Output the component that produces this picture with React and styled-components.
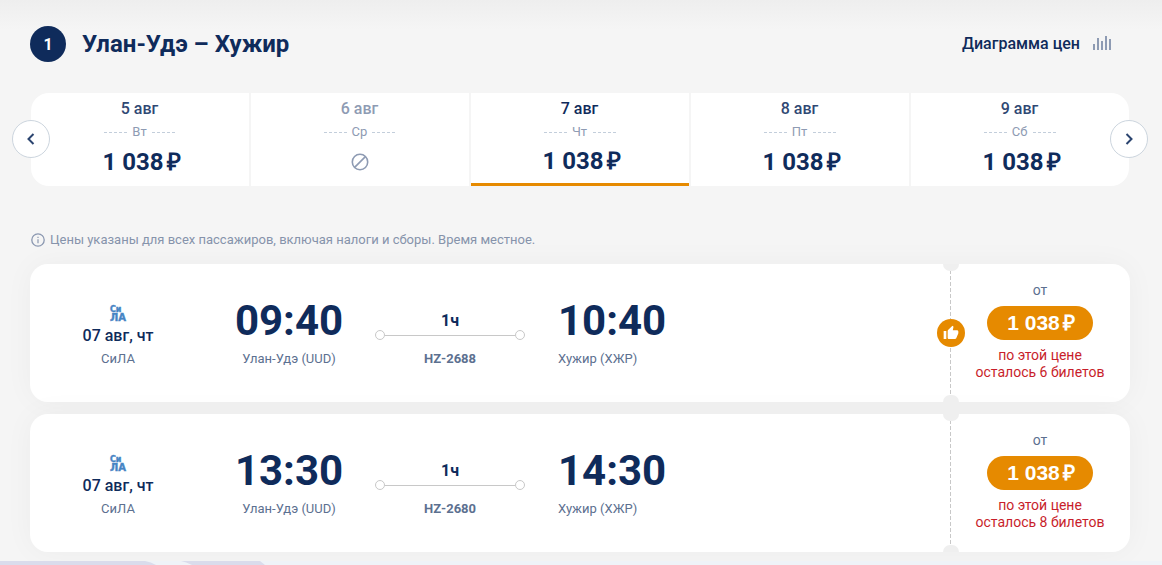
import React, {useState} from 'react';
import styled, {createGlobalStyle} from 'styled-components';

const days = [
  {date: '5 авг', weekday: 'Вт', price: '1 038'},
  {date: '6 авг', weekday: 'Ср', price: null},
  {date: '7 авг', weekday: 'Чт', price: '1 038'},
  {date: '8 авг', weekday: 'Пт', price: '1 038'},
  {date: '9 авг', weekday: 'Сб', price: '1 038'}
];

const flights = [
  {number: 'HZ-2688', depart: '09:40', arrive: '10:40', seats: 6, best: true},
  {number: 'HZ-2680', depart: '13:30', arrive: '14:30', seats: 8, best: false}
];

const ChartIcon = () => (
  <svg width="20" height="16" viewBox="0 0 20 16" fill="#8e9bb3" aria-hidden="true">
    <path d="M1 9h2v6H1zM5 3h2v12H5zM9 6h2v9H9zM13 1h2v14h-2zM17 4h2v11h-2z" />
  </svg>
);

const ArrowIcon = ({d}) => (
  <svg width="16" height="16" viewBox="0 0 16 16" fill="none" stroke="#2b446f" strokeWidth="2" aria-hidden="true">
    <path d={d} />
  </svg>
);

const NoFlightsIcon = () => (
  <svg width="18" height="18" viewBox="0 0 18 18" fill="none" stroke="#8e9bb3" strokeWidth="1.6" role="img" aria-label="Нет рейсов">
    <circle cx="9" cy="9" r="7.7" />
    <path d="M3.6 14.4L14.4 3.6" />
  </svg>
);

const InfoIcon = () => (
  <svg width="14" height="14" viewBox="0 0 14 14" fill="none" stroke="#8a97b0" aria-hidden="true">
    <circle cx="7" cy="7" r="6.2" strokeWidth="1.3" />
    <path d="M7 6.2V10.2M7 3.8V5.1" strokeWidth="1.2" />
  </svg>
);

const ThumbIcon = () => (
  <svg width="16" height="16" viewBox="0 0 24 24" fill="#fff" aria-hidden="true">
    <path d="M1 21h4V9H1v12zm22-11c0-1.100-.9-2-2-2h-6.310l.95-4.570.03-.32c0-.41-.17-.79-.44-1.060L14.170 1 7.590 7.590C7.220 7.950 7 8.450 7 9v10c0 1.100.9 2 2 2h9c.83 0 1.540-.5 1.840-1.220l3.020-7.050c.09-.23.14-.47.14-.73v-2z" />
  </svg>
);

const Flight = ({flight}) => (
  <FlightCard>
    <Airline>
      <AirlineLogo viewBox="0 0 18 16" aria-hidden="true">
        <text x="1" y="6" fontSize="8">Си</text>
        <text x="1" y="15" fontSize="10">ЛА</text>
      </AirlineLogo>
      <FlightDate>07 авг, чт</FlightDate>
      <Caption>СиЛА</Caption>
    </Airline>
    <Point $align="center">
      <Time>{flight.depart}</Time>
      <Caption>Улан-Удэ (UUD)</Caption>
    </Point>
    <Route>
      <Duration>1ч</Duration>
      <RouteLine />
      <Caption $bold>{flight.number}</Caption>
    </Route>
    <Point $align="flex-start">
      <Time>{flight.arrive}</Time>
      <Caption>Хужир (ХЖР)</Caption>
    </Point>
    <Fare>
      <Notch $edge="top" />
      <Notch $edge="bottom" />
      {flight.best && <BestBadge><ThumbIcon /></BestBadge>}
      <From>от</From>
      <BuyButton type="button">1 038<Ruble>₽</Ruble></BuyButton>
      <SeatsLeft>по этой цене<br />осталось {flight.seats} билетов</SeatsLeft>
    </Fare>
  </FlightCard>
);

const App = () => {
  const [selected, setSelected] = useState(2);

  return (
    <Page>
      <GlobalStyle />
      <Content>
        <Header>
          <StepNumber>1</StepNumber>
          <Title>Улан-Удэ – Хужир</Title>
          <ChartButton type="button">Диаграмма цен <ChartIcon /></ChartButton>
        </Header>

        <DateStrip>
          <ArrowButton type="button" $side="left" aria-label="Предыдущие даты"><ArrowIcon d="M10.500 3L5.500 8l5 5" /></ArrowButton>
          <DayList>
            {days.map((day, i) => (
              <Day key={day.date} type="button" $active={i === selected} disabled={!day.price} onClick={() => setSelected(i)}>
                <DayDate $active={i === selected} $empty={!day.price}>{day.date}</DayDate>
                <Weekday>{day.weekday}</Weekday>
                {day.price
                  ? <DayPrice $active={i === selected}>{day.price}<Ruble>₽</Ruble></DayPrice>
                  : <NoPrice><NoFlightsIcon /></NoPrice>}
              </Day>
            ))}
          </DayList>
          <ArrowButton type="button" $side="right" aria-label="Следующие даты"><ArrowIcon d="M5.500 3l5 5-5 5" /></ArrowButton>
        </DateStrip>

        <Note><InfoIcon /> Цены указаны для всех пассажиров, включая налоги и сборы. Время местное.</Note>

        <FlightList>
          {flights.map(flight => <Flight key={flight.number} flight={flight} />)}
        </FlightList>
      </Content>
      <Footer>
        <svg width="300" height="4" viewBox="0 0 300 4" fill="#dadcec" aria-hidden="true">
          <path d="M0 0H145Q151 1 156 4H0zM181 0H260L265 4H192Q186 1 181 0z" />
        </svg>
      </Footer>
    </Page>
  );
};

// styled components
const GlobalStyle = createGlobalStyle`
  * {
    box-sizing: border-box;
  }
  body {
    margin: 0;
    background: #f5f5f5;
    color: #0f2b5b;
    font-family: Roboto, sans-serif;
  }
  button {
    padding: 0;
    border: 0;
    background: none;
    color: inherit;
    font-family: inherit;
    cursor: pointer;
  }
  svg {
    display: block;
    flex: none;
  }
`;

const Page = styled.div`
  display: flex;
  flex-direction: column;
  min-height: 100vh;
  overflow: hidden;
  background: linear-gradient(#eeeeee, #f5f5f5 30px);
`;

const Content = styled.main`
  padding: 26px 32px 9px 30px;
`;

const Header = styled.header`
  display: flex;
  align-items: center;
  height: 36px;
`;

const StepNumber = styled.span`
  display: flex;
  align-items: center;
  justify-content: center;
  width: 36px;
  height: 36px;
  border-radius: 50%;
  background: #0f2b5b;
  color: #fff;
  font-size: 16px;
  font-weight: 700;
`;

const Title = styled.h1`
  flex: 1;
  margin: 0 16px;
  font-size: 24px;
  line-height: 28px;
  font-weight: 700;
`;

const ChartButton = styled.button`
  display: flex;
  align-items: center;
  gap: 12px;
  margin-right: 18px;
  padding-bottom: 2px;
  font-size: 16px;
  font-weight: 500;
`;

const DateStrip = styled.div`
  position: relative;
  margin: 31px 1px 0;
`;

const DayList = styled.div`
  display: flex;
  gap: 2px;
  height: 93px;
  overflow: hidden;
  border-radius: 18px;
`;

const Day = styled.button`
  display: flex;
  flex: 1;
  flex-direction: column;
  align-items: center;
  padding: 6px 1px 0 0;
  border-bottom: ${props => props.$active ? '3px solid #e68a00' : '0'};
  background: #fff;
`;

const DayDate = styled.span`
  color: ${props => props.$empty ? '#8e9bb3' : props.$active ? '#0f2b5b' : '#2f4873'};
  font-size: 16px;
  line-height: 20px;
  font-weight: 500;
`;

const Weekday = styled.span`
  display: flex;
  align-items: center;
  justify-content: space-between;
  width: 72px;
  margin-top: 4px;
  color: #8e9bb3;
  font-size: 13px;
  line-height: 18px;

  &::before,
  &::after {
    width: 23px;
    height: 1px;
    background: repeating-linear-gradient(90deg, #c3cedb 0 3px, transparent 3px 5px);
    content: '';
  }
`;

const DayPrice = styled.span`
  display: flex;
  align-items: baseline;
  height: 28px;
  margin-top: ${props => props.$active ? '6px' : '7px'};
  padding-left: 4px;
  font-size: 24px;
  line-height: 28px;
  font-weight: 700;
  white-space: pre;
`;

const NoPrice = styled.span`
  display: flex;
  align-items: center;
  height: 28px;
  margin-top: 7px;
`;

const Ruble = styled.span`
  margin-left: 3px;
  font-family: "Liberation Sans", sans-serif;
`;

const ArrowButton = styled.button`
  position: absolute;
  top: 50%;
  ${props => props.$side}: -19px;
  display: flex;
  align-items: center;
  justify-content: center;
  width: 38px;
  height: 38px;
  margin-top: -20px;
  border: 1px solid #ccd5de;
  border-radius: 50%;
  background: #fff;
`;

const Note = styled.p`
  display: flex;
  align-items: center;
  gap: 5px;
  margin: 46px 0 16px 1px;
  color: #8693ab;
  font-size: 13px;
  line-height: 16px;
`;

const FlightList = styled.div`
  display: flex;
  flex-direction: column;
  gap: 12px;
`;

const FlightCard = styled.article`
  display: grid;
  grid-template-columns: 176px 166px 156px 1fr 180px;
  border-radius: 18px;
  background: #fff;
  box-shadow: 0 0 30px rgba(0, 0, 0, 0.04);
`;

const Airline = styled.div`
  display: flex;
  flex-direction: column;
  align-items: center;
  padding-top: 42px;
`;

const AirlineLogo = styled.svg`
  width: 18px;
  height: 16px;
  overflow: visible;
  fill: #4684c4;
  stroke: #4684c4;
  stroke-width: 0.4px;
  font-family: "DejaVu Sans", sans-serif;
  font-weight: 700;
`;

const FlightDate = styled.span`
  margin-top: 4px;
  font-size: 16px;
  line-height: 20px;
  font-weight: 500;
`;

const Caption = styled.span`
  margin-top: 4px;
  color: #5c7090;
  font-size: 13px;
  line-height: 18px;
  font-weight: ${props => props.$bold ? 700 : 400};
`;

const Point = styled.div`
  display: flex;
  flex-direction: column;
  align-items: ${props => props.$align};
  padding-top: 32px;
  padding-left: ${props => props.$align === 'flex-start' ? '30px' : '0'};
`;

const Time = styled.time`
  font-size: 42px;
  line-height: 50px;
  font-weight: 700;
`;

const Route = styled.div`
  display: flex;
  flex-direction: column;
  align-items: center;
  padding-top: 47px;
`;

const Duration = styled.span`
  font-size: 16px;
  line-height: 19px;
  font-weight: 700;
`;

const RouteLine = styled.div`
  display: flex;
  align-items: center;
  justify-content: space-between;
  width: 150px;
  height: 10px;
  margin-bottom: 6px;
  background: linear-gradient(#c8c8c8, #c8c8c8) center / 130px 1px no-repeat;

  &::before,
  &::after {
    box-sizing: border-box;
    width: 10px;
    height: 10px;
    border: 1px solid #c8c8c8;
    border-radius: 50%;
    content: '';
  }
`;

const Fare = styled.div`
  position: relative;
  display: flex;
  flex-direction: column;
  align-items: center;
  padding: 16px 0 21px;
  background: repeating-linear-gradient(#c8c8c8 0 4px, transparent 4px 6px) left / 1px 100% no-repeat;
`;

const Notch = styled.span`
  position: absolute;
  ${props => props.$edge}: 0;
  left: -7px;
  width: 16px;
  height: 7px;
  border-radius: ${props => props.$edge === 'top' ? '0 0 8px 8px' : '8px 8px 0 0'};
  background: #efefef;
`;

const BestBadge = styled.span`
  position: absolute;
  top: 55px;
  left: -13px;
  display: flex;
  align-items: center;
  justify-content: center;
  width: 28px;
  height: 28px;
  border-radius: 50%;
  background: #e68a00;
`;

const From = styled.span`
  color: #5c7090;
  font-size: 14px;
  line-height: 20px;
`;

const BuyButton = styled.button`
  height: 34px;
  margin-top: 6px;
  padding: 0 18px 0 20px;
  border-radius: 17px;
  background: #e68a00;
  color: #fff;
  font-family: "Liberation Sans", sans-serif;
  font-size: 21px;
  line-height: 34px;
  font-weight: 700;
`;

const SeatsLeft = styled.span`
  margin-top: 7px;
  color: #c81e2b;
  font-size: 14px;
  line-height: 17px;
  text-align: center;
`;

const Footer = styled.footer`
  flex: 1;
  min-height: 4px;
  background: #eff3f8;
`;

export default App;
